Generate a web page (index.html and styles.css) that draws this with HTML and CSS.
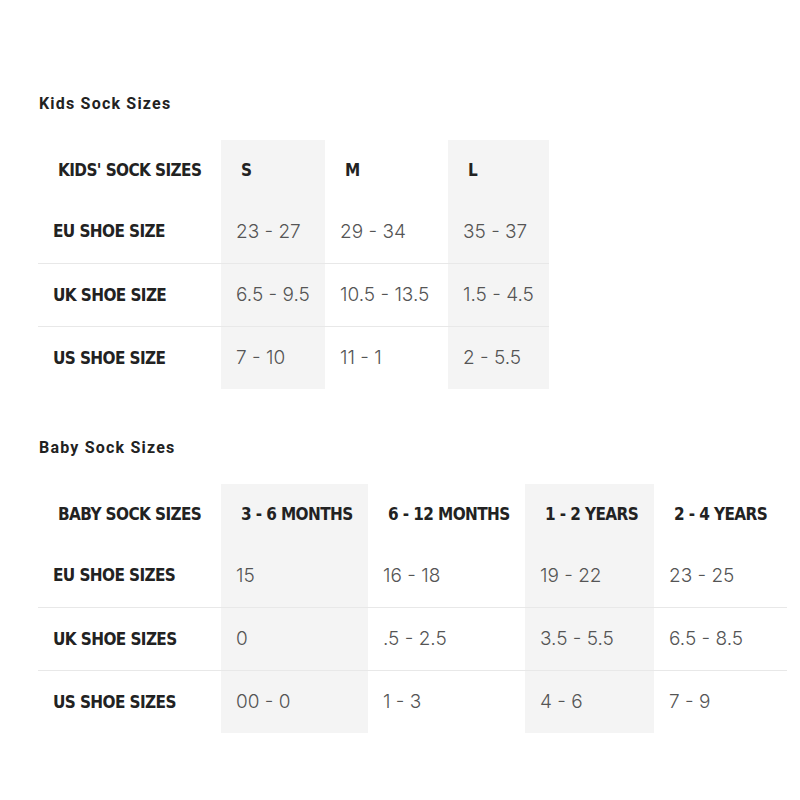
FILE: index.html
```html
<!DOCTYPE html>
<html>
<head>
<meta charset="utf-8">
<link rel="stylesheet" href="styles.css">
</head>
<body>
<div class="page">
  <section class="block">
    <h2 class="title">Kids Sock Sizes</h2>
    <table class="chart kids">
      <colgroup>
        <col class="c-label">
        <col class="c-s shade">
        <col class="c-m">
        <col class="c-l shade">
      </colgroup>
      <thead>
        <tr><th>KIDS' SOCK SIZES</th><th>S</th><th>M</th><th>L</th></tr>
      </thead>
      <tbody>
        <tr><th>EU SHOE SIZE</th><td>23 - 27</td><td>29 - 34</td><td>35 - 37</td></tr>
        <tr><th>UK SHOE SIZE</th><td>6.5 - 9.5</td><td>10.5 - 13.5</td><td>1.5 - 4.5</td></tr>
        <tr><th>US SHOE SIZE</th><td>7 - 10</td><td>11 - 1</td><td>2 - 5.5</td></tr>
      </tbody>
    </table>
  </section>
  <section class="block">
    <h2 class="title">Baby Sock Sizes</h2>
    <table class="chart baby">
      <colgroup>
        <col class="c-label">
        <col class="b-1 shade">
        <col class="b-2">
        <col class="b-3 shade">
        <col class="b-4">
      </colgroup>
      <thead>
        <tr><th>BABY SOCK SIZES</th><th>3 - 6 MONTHS</th><th>6 - 12 MONTHS</th><th>1 - 2 YEARS</th><th>2 - 4 YEARS</th></tr>
      </thead>
      <tbody>
        <tr><th>EU SHOE SIZES</th><td>15</td><td>16 - 18</td><td>19 - 22</td><td>23 - 25</td></tr>
        <tr><th>UK SHOE SIZES</th><td>0</td><td>.5 - 2.5</td><td>3.5 - 5.5</td><td>6.5 - 8.5</td></tr>
        <tr><th>US SHOE SIZES</th><td>00 - 0</td><td>1 - 3</td><td>4 - 6</td><td>7 - 9</td></tr>
      </tbody>
    </table>
  </section>
</div>
</body>
</html>
```
FILE: styles.css
```css
html, body {
  margin: 0;
  padding: 0;
  background: #ffffff;
}
.page {
  padding: 94px 0 0 38px;
}
.block {
  margin-bottom: 49px;
}
.title {
  margin: 0 0 0 1px;
  font-family: Roboto, "Liberation Sans", sans-serif;
  font-weight: 700;
  font-size: 16px;
  line-height: 19px;
  letter-spacing: 1.2px;
  color: #222;
}
.chart {
  margin-top: 27px;
  border-collapse: collapse;
  table-layout: fixed;
}
.shade {
  background: #f4f4f4;
}
.c-label { width: 183px; }
.c-s { width: 104px; }
.c-m { width: 123px; }
.c-l { width: 101px; }
.b-1 { width: 147px; }
.b-2 { width: 157px; }
.b-3 { width: 129px; }
.b-4 { width: 133px; }
.chart th {
  font-family: "DejaVu Sans Condensed", "DejaVu Sans", sans-serif;
  font-stretch: condensed;
  font-weight: 700;
  font-size: 17px;
  letter-spacing: -0.6px;
  color: #222;
  text-align: left;
  padding: 0 0 0 15px;
  white-space: nowrap;
}
.chart thead th {
  height: 60px;
  padding-left: 20px;
}
.chart td {
  font-family: Inter, Roboto, sans-serif;
  font-weight: 300;
  font-size: 19px;
  color: #555;
  padding: 0 0 0 15px;
  white-space: nowrap;
}
.chart tbody tr {
  height: 63px;
}
.chart tbody tr + tr {
  border-top: 1px solid #e8e8e8;
}
```
